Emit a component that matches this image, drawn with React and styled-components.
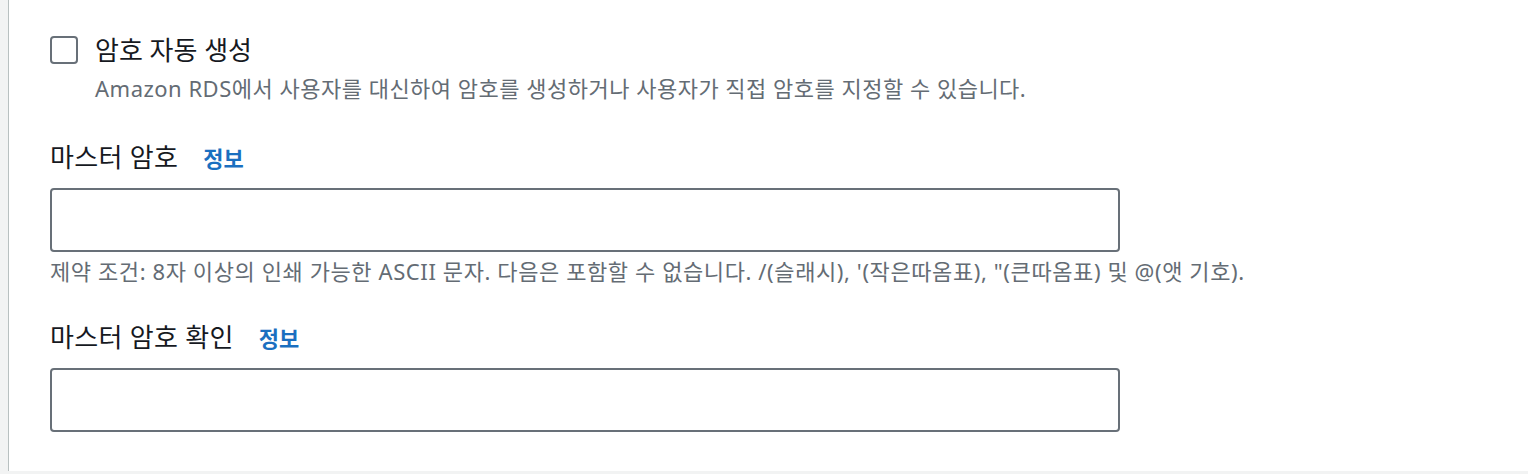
import React from 'react'
import styled, { createGlobalStyle } from 'styled-components'

const GlobalStyle = createGlobalStyle`
  body {
    margin: 0;
    background-color: #f2f3f3;
    font-family: "Noto Sans", "Noto Sans CJK KR", sans-serif;
  }
`

const Card = styled.div`
  margin-left: 9px;
  height: 471px;
  box-sizing: border-box;
  padding: 36px 0 0 41px;
  background-color: #ffffff;
  box-shadow: 0 2px 0 0 #8d9899, -1px 0 0 0 #b8c0c0;
  display: flex;
  flex-direction: column;
`

const CheckboxRow = styled.label`
  display: flex;
  align-items: center;
  gap: 17px;
  height: 28px;
  cursor: pointer;
`

const Box = styled.span`
  width: 28px;
  height: 28px;
  box-sizing: border-box;
  border: 2px solid #687078;
  border-radius: 4px;
  background-color: #ffffff;
`

const CheckboxLabel = styled.span`
  font-size: 26px;
  line-height: 28px;
  color: #16191f;
`

const Description = styled.div`
  margin: 10px 0 0 45px;
  font-size: 22px;
  letter-spacing: 0.5px;
  line-height: 28px;
  color: #646c74;
`

const LabelRow = styled.div`
  display: flex;
  align-items: center;
  gap: 25px;
  height: 32px;
  margin-top: ${props => props.gap}px;
`

const Label = styled.span`
  font-size: 26px;
  letter-spacing: 0.3px;
  line-height: 32px;
  color: #16191f;
`

const InfoLink = styled.a`
  font-size: 22px;
  font-weight: 700;
  color: #1a6fc0;
  text-decoration: none;
  cursor: pointer;
`

const Input = styled.input`
  margin-top: 15px;
  width: 1070px;
  height: 64px;
  box-sizing: border-box;
  border: 2px solid #687078;
  border-radius: 4px;
  padding: 0 16px;
  font-size: 20px;
  font-family: inherit;
  outline: none;
`

const Constraint = styled.div`
  margin-top: 5px;
  font-size: 22px;
  letter-spacing: 0.6px;
  line-height: 28px;
  color: #646c74;
`

const Field = ({ label, gap, children }) => (
  <>
    <LabelRow gap={gap}>
      <Label>{label}</Label>
      <InfoLink>정보</InfoLink>
    </LabelRow>
    <Input type="password" />
    {children}
  </>
)

const App = () => (
  <>
    <GlobalStyle />
    <Card>
      <CheckboxRow>
        <Box />
        <CheckboxLabel>암호 자동 생성</CheckboxLabel>
      </CheckboxRow>
      <Description>
        Amazon RDS에서 사용자를 대신하여 암호를 생성하거나 사용자가 직접 암호를 지정할 수 있습니다.
      </Description>
      <Field label="마스터 암호" gap={39}>
        <Constraint>
          제약 조건: 8자 이상의 인쇄 가능한 ASCII 문자. 다음은 포함할 수 없습니다. /(슬래시), '(작은따옴표), "(큰따옴표) 및 @(앳 기호).
        </Constraint>
      </Field>
      <Field label="마스터 암호 확인" gap={36} />
    </Card>
  </>
)

export default App
